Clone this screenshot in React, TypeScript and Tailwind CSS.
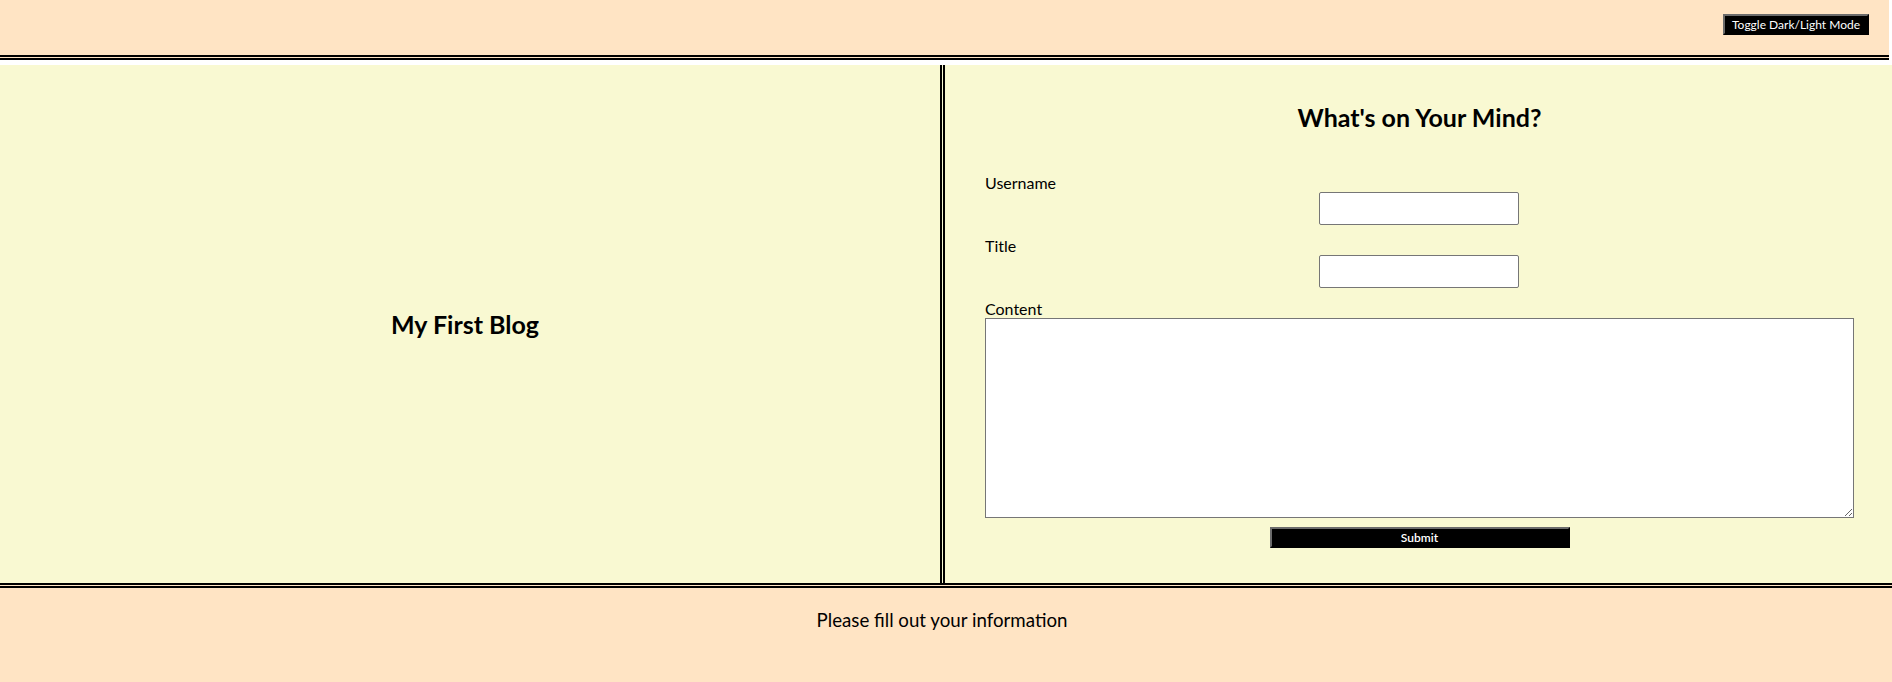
import { useState } from 'react';

export default function App() {
  const [dark, setDark] = useState(false);
  const [username, setUsername] = useState('');
  const [title, setTitle] = useState('');
  const [content, setContent] = useState('');

  return (
    <div className="min-h-screen bg-white font-['Lato','Liberation_Sans',sans-serif] text-black">
      {/* Header */}
      <header className="w-[1889px] h-[60px] bg-[#ffe4c4] border-b-[5px] border-double border-black flex justify-end items-start pr-[20px] pt-[14px]">
        <button
          onClick={() => setDark(!dark)}
          className="h-[21px] w-[146px] bg-black text-white text-[12px] leading-none border-2 border-solid border-t-[#6b6b6b] border-l-[#6b6b6b] border-r-black border-b-black"
        >
          Toggle Dark/Light Mode
        </button>
      </header>

      {/* Main */}
      <main className="mt-[5px] h-[518px] flex bg-[#f9f9d2]">
        <section className="w-[945px] border-r-[5px] border-double border-black flex items-center justify-center pr-[10px]">
          <h1 className="text-[25px] font-bold leading-[29px]">My First Blog</h1>
        </section>

        <section className="flex-1 pl-[40px] pr-[38px] pt-[38px]">
          <h2 className="text-[25px] font-bold leading-[29px] text-center">What's on Your Mind?</h2>
          <form className="mt-[41px]" onSubmit={(e) => e.preventDefault()}>
            <label className="block text-[16px] leading-[19px]">Username</label>
            <input
              value={username}
              onChange={(e) => setUsername(e.target.value)}
              className="block ml-[334px] w-[200px] h-[33px] bg-white border border-[#767676] rounded-[2px]"
            />
            <label className="block mt-[11px] text-[16px] leading-[19px]">Title</label>
            <input
              value={title}
              onChange={(e) => setTitle(e.target.value)}
              className="block ml-[334px] w-[200px] h-[33px] bg-white border border-[#767676] rounded-[2px]"
            />
            <label className="block mt-[11px] text-[16px] leading-[19px]">Content</label>
            <textarea
              value={content}
              onChange={(e) => setContent(e.target.value)}
              className="block w-full h-[200px] bg-white border border-[#767676]"
            />
            <div className="flex justify-center mt-[9px]">
              <button
                type="submit"
                className="h-[21px] w-[300px] bg-black text-white text-[12px] font-semibold leading-none border-2 border-solid border-t-[#6b6b6b] border-l-[#6b6b6b] border-r-black border-b-black"
              >
                Submit
              </button>
            </div>
          </form>
        </section>
      </main>

      {/* Footer */}
      <footer className="min-h-[99px] bg-[#ffe4c4] border-t-[5px] border-double border-black pt-[21px] pr-[8px] text-center">
        <p className="text-[18.7px] leading-[23px]">Please fill out your information</p>
      </footer>
    </div>
  );
}
